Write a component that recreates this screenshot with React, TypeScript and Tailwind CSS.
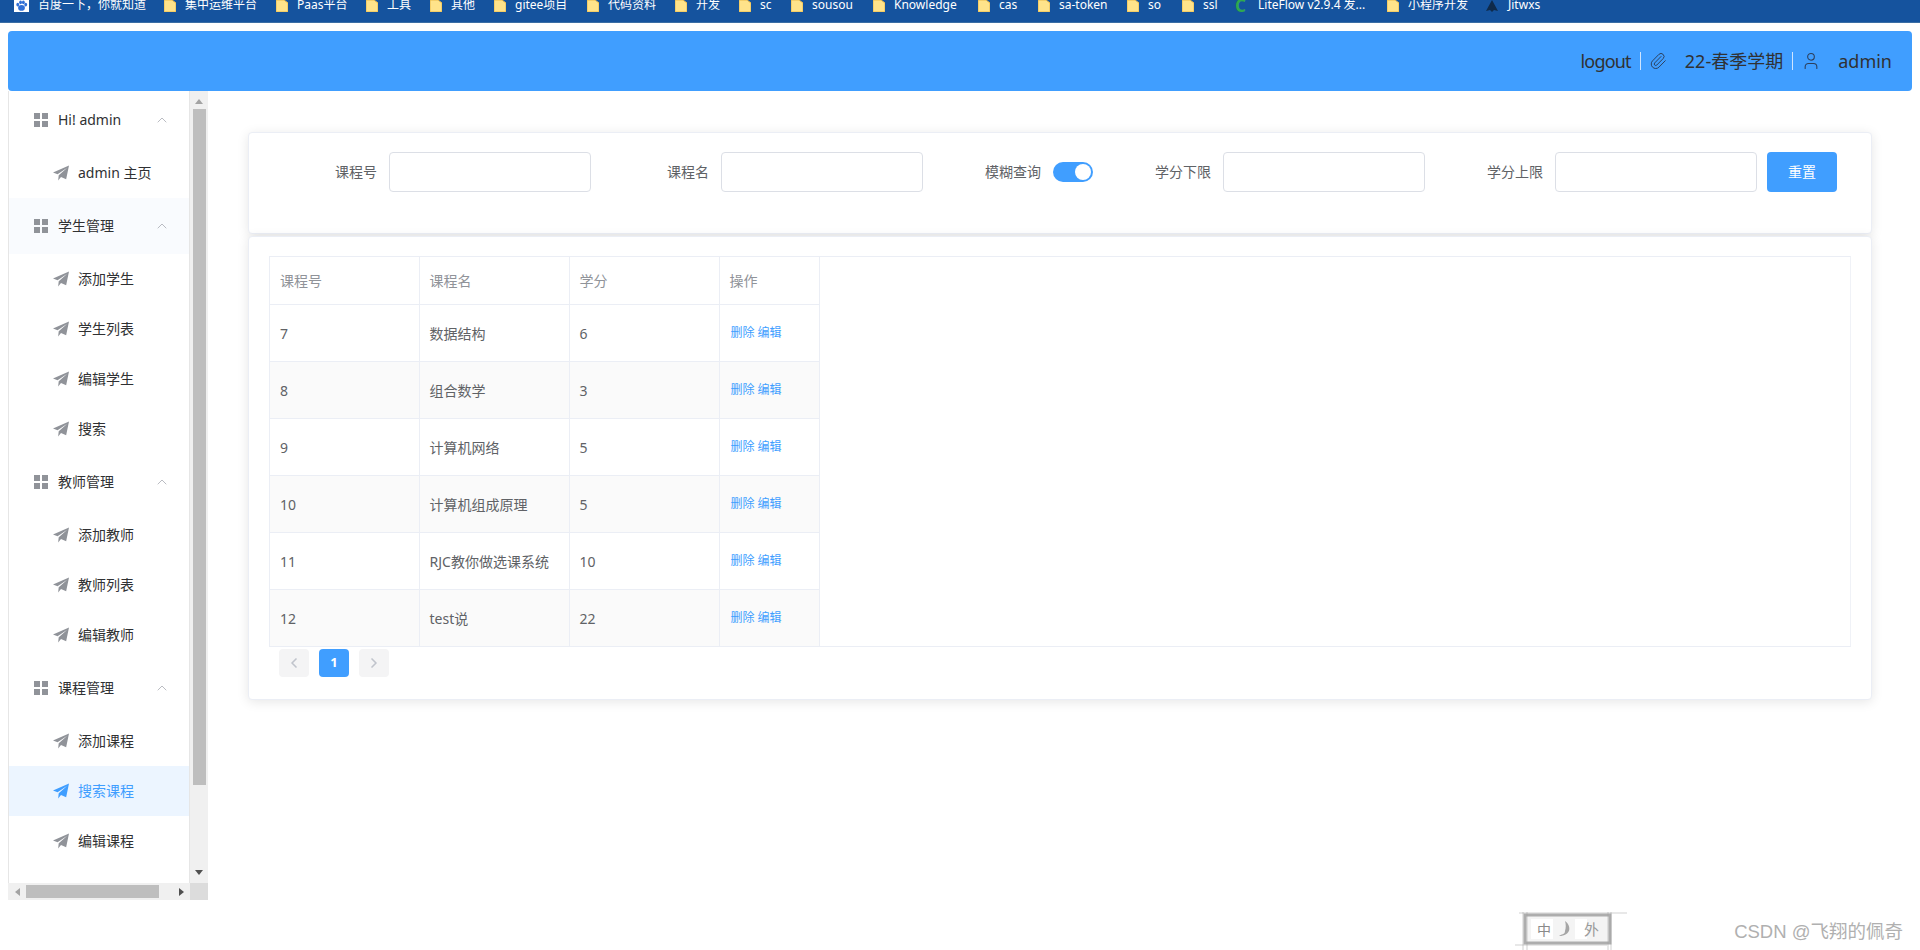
import { Paperclip, User, ChevronUp, ChevronLeft, ChevronRight } from 'lucide-react';

const bookmarks = [
	{ icon: 'baidu', label: '百度一下，你就知道', width: 'w-[150px]' },
	{ icon: 'folder', label: '集中运维平台', width: 'w-[112px]' },
	{ icon: 'folder', label: 'Paas平台', width: 'w-[90px]' },
	{ icon: 'folder', label: '工具', width: 'w-[64px]' },
	{ icon: 'folder', label: '其他', width: 'w-[64px]' },
	{ icon: 'folder', label: 'gitee项目', width: 'w-[93px]' },
	{ icon: 'folder', label: '代码资料', width: 'w-[88px]' },
	{ icon: 'folder', label: '开发', width: 'w-[64px]' },
	{ icon: 'folder', label: 'sc', width: 'w-[52px]' },
	{ icon: 'folder', label: 'sousou', width: 'w-[82px]' },
	{ icon: 'folder', label: 'Knowledge', width: 'w-[105px]' },
	{ icon: 'folder', label: 'cas', width: 'w-[60px]' },
	{ icon: 'folder', label: 'sa-token', width: 'w-[89px]' },
	{ icon: 'folder', label: 'so', width: 'w-[55px]' },
	{ icon: 'folder', label: 'ssl', width: 'w-[53px]' },
	{ icon: 'c', label: 'LiteFlow v2.9.4 发...', width: 'w-[152px]' },
	{ icon: 'folder', label: '小程序开发', width: 'w-[98px]' },
	{ icon: 'jit', label: 'Jitwxs', width: 'w-[60px]' },
];

const menu = [
	{ title: 'Hi! admin', items: ['admin 主页'] },
	{ title: '学生管理', items: ['添加学生', '学生列表', '编辑学生', '搜索'], hover: true },
	{ title: '教师管理', items: ['添加教师', '教师列表', '编辑教师'] },
	{ title: '课程管理', items: ['添加课程', '搜索课程', '编辑课程'] },
];

const courses = [
	{ id: 7, name: '数据结构', credit: 6 },
	{ id: 8, name: '组合数学', credit: 3 },
	{ id: 9, name: '计算机网络', credit: 5 },
	{ id: 10, name: '计算机组成原理', credit: 5 },
	{ id: 11, name: 'RJC教你做选课系统', credit: 10 },
	{ id: 12, name: 'test说', credit: 22 },
];

const BookmarkIcon = ({ type }: { type: string }) => {
	if (type === 'baidu') {
		return (
			<svg viewBox="0 0 16 12" className="w-[15px] h-3 shrink-0 bg-white">
				<ellipse cx="4" cy="4.5" rx="1.5" ry="2" fill="#2f6fd6" />
				<ellipse cx="7" cy="2" rx="1.5" ry="2" fill="#2f6fd6" />
				<ellipse cx="10" cy="2" rx="1.5" ry="2" fill="#2f6fd6" />
				<ellipse cx="12.5" cy="4.5" rx="1.5" ry="2" fill="#2f6fd6" />
				<ellipse cx="8" cy="8" rx="3.6" ry="3" fill="#2f6fd6" />
			</svg>
		);
	}
	if (type === 'c') {
		return (
			<span className="w-[14px] shrink-0 text-[17px] leading-[12px] font-bold text-[#2fa84f]">C</span>
		);
	}
	if (type === 'jit') {
		return (
			<svg viewBox="0 0 14 12" className="w-[14px] h-3 shrink-0">
				<path d="M7 0 L13 11 L9 10 L7 12 L5 10 L1 11 Z" fill="#0f2a4a" />
			</svg>
		);
	}
	return (
		<svg viewBox="0 0 12 12" className="w-3 h-3 shrink-0">
			<path d="M0 0 H8 L12 3 V12 H0 Z" fill="#ffe38a" stroke="#e9b949" strokeWidth="1" />
		</svg>
	);
};

const GridIcon = () => (
	<svg viewBox="0 0 14 14" className="w-[14px] h-[14px] shrink-0" fill="#909399">
		<rect x="0" y="0" width="6" height="6" />
		<rect x="8" y="0" width="6" height="6" />
		<rect x="0" y="8" width="6" height="6" />
		<rect x="8" y="8" width="6" height="6" />
	</svg>
);

const PlaneIcon = ({ active }: { active?: boolean }) => (
	<svg
		viewBox="0 0 14 14"
		className={active ? 'w-4 h-4 shrink-0 fill-[#409eff]' : 'w-4 h-4 shrink-0 fill-[#909399]'}
	>
		<path d="M14 0.5 L0 6.5 L4 8.2 L12.5 2.5 L5 9 L4.5 13.5 L7 10.5 L11.5 12.5 Z" />
	</svg>
);

const Field = ({ label, className, width }: { label: string; className: string; width: string }) => (
	<div className={`flex items-center gap-3 ${className}`}>
		<label className="text-sm text-[#606266] whitespace-nowrap">{label}</label>
		<input className={`h-10 ${width} bg-white border border-[#dcdfe6] rounded outline-none`} />
	</div>
);

const Sidebar = () => (
	<aside className="w-[200px] h-[809px] ml-2 flex flex-col shrink-0">
		<div className="flex h-[792px]">
			<nav className="w-[182px] border-x border-[#e6e6e6] overflow-hidden pt-px">
				{menu.map((group) => (
					<div key={group.title}>
						<div
							className={`h-14 flex items-center pl-[25px] text-sm text-[#303133] ${group.hover ? 'bg-[#f9fbfe]' : ''}`}
						>
							<GridIcon />
							<span className="ml-[10px] flex-1">{group.title}</span>
							<ChevronUp className="w-4 h-4 mr-[19px] text-[#a8abb2]" strokeWidth={1.2} />
						</div>
						{group.items.map((item) => {
							const active = item === '搜索课程';
							return (
								<div
									key={item}
									className={`h-[50px] flex items-center pl-[44px] gap-[9px] text-sm ${active ? 'bg-[#ecf5ff] text-[#409eff]' : 'text-[#303133]'}`}
								>
									<PlaneIcon active={active} />
									<span>{item}</span>
								</div>
							);
						})}
					</div>
				))}
			</nav>
			<div className="w-[18px] bg-[#f0f0f0] flex flex-col items-center">
				<svg viewBox="0 0 8 5" className="w-2 h-[5px] mt-2 fill-[#a3a3a3]">
					<path d="M4 0 L8 5 H0 Z" />
				</svg>
				<div className="w-[13px] h-[676px] mt-[5px] bg-[#bebebe]" />
				<svg viewBox="0 0 8 5" className="w-2 h-[5px] mt-[85px] fill-[#505050]">
					<path d="M0 0 H8 L4 5 Z" />
				</svg>
			</div>
		</div>
		<div className="h-[17px] flex bg-[#f0f0f0]">
			<div className="w-[182px] flex items-center pl-[7px]">
				<svg viewBox="0 0 5 8" className="w-[5px] h-2 fill-[#a3a3a3]">
					<path d="M5 0 V8 L0 4 Z" />
				</svg>
				<div className="w-[133px] h-[13px] ml-[6px] bg-[#bebebe]" />
				<svg viewBox="0 0 5 8" className="w-[5px] h-2 ml-[20px] fill-[#505050]">
					<path d="M0 0 L5 4 L0 8 Z" />
				</svg>
			</div>
			<div className="w-[18px] bg-[#dcdcdc]" />
		</div>
	</aside>
);

const CourseTable = () => (
	<div className="h-[391px] border border-[#ebeef5] border-r-[#f0f2f7]">
		<table className="w-[549px] table-fixed border-collapse text-sm text-[#606266]">
			<thead>
				<tr className="h-[47px] text-[#909399] text-left">
					<th className="w-[149px] pl-[10px] pt-[2px] font-normal border-r border-b border-[#ebeef5]">课程号</th>
					<th className="w-[150px] pl-[10px] pt-[2px] font-normal border-r border-b border-[#ebeef5]">课程名</th>
					<th className="w-[150px] pl-[10px] pt-[2px] font-normal border-r border-b border-[#ebeef5]">学分</th>
					<th className="w-[100px] pl-[10px] pt-[2px] font-normal border-r border-b border-[#ebeef5]">操作</th>
				</tr>
			</thead>
			<tbody>
				{courses.map((course, index) => (
					<tr key={course.id} className={index % 2 === 1 ? 'h-[57px] bg-[#fafafa]' : 'h-[57px]'}>
						<td className="pl-[10px] pt-[2px] border-r border-b border-[#ebeef5]">{course.id}</td>
						<td className="pl-[10px] pt-[2px] border-r border-b border-[#ebeef5] whitespace-nowrap">{course.name}</td>
						<td className="pl-[10px] pt-[2px] border-r border-b border-[#ebeef5]">{course.credit}</td>
						<td className="pl-[11px] pt-px border-r border-b border-[#ebeef5] text-xs text-[#409eff]">删除 编辑</td>
					</tr>
				))}
			</tbody>
		</table>
	</div>
);

const Pagination = () => (
	<div className="flex gap-[10px] ml-[10px] mt-[2px]">
		<button className="w-[30px] h-7 rounded-sm bg-[#f4f4f5] text-[#c0c4cc] flex items-center justify-center">
			<ChevronLeft className="w-4 h-4" strokeWidth={2.5} />
		</button>
		<button className="w-[30px] h-7 rounded-sm bg-[#409eff] text-white text-[13px] font-bold flex items-center justify-center">
			1
		</button>
		<button className="w-[30px] h-7 rounded-sm bg-[#f4f4f5] text-[#c0c4cc] flex items-center justify-center">
			<ChevronRight className="w-4 h-4" strokeWidth={2.5} />
		</button>
	</div>
);

const Stamp = () => (
	<svg viewBox="0 0 112 38" className="w-[112px] h-[38px]">
		<rect x="10" y="3" width="85" height="28" fill="#f4f4f4" />
		<rect x="16" y="7" width="22" height="20" fill="#ffffff" />
		<rect x="60" y="7" width="12" height="20" fill="#ffffff" />
		<g stroke="#a0a0a0" fill="none">
			<rect x="10" y="3" width="85" height="28" strokeWidth="3" opacity="0.85" />
			<path d="M4 1 H112 M0 33 H92 M8 0 V38 M12 0 V38 M93 0 V38 M96 0 V38" strokeWidth="0.7" opacity="0.7" />
		</g>
		<text x="22" y="23" fontSize="14" fill="#8a8a8a">
			中
		</text>
		<path d="M50 9 C57 14 56 24 44 24 C46 22 50 23 50 19 C51 16 51 12 50 9 Z" fill="#a5a5a5" />
		<text x="69" y="23" fontSize="15" fill="#9a9a9a">
			外
		</text>
	</svg>
);

const App = () => {
	return (
		<div className="relative w-[1920px] h-[950px] overflow-hidden bg-white font-['Noto_Sans','Noto_Sans_CJK_SC',sans-serif]">
			<div className="h-[23px] pl-[14px] flex bg-[#15539e] border-b border-[#3a6ea5] overflow-hidden">
				{bookmarks.map((b) => (
					<div key={b.label} className={`${b.width} flex items-start gap-[9px] h-3 shrink-0`}>
						<BookmarkIcon type={b.icon} />
						<span className="-mt-[4px] text-xs leading-[18px] text-white whitespace-nowrap">{b.label}</span>
					</div>
				))}
			</div>

			<header className="h-[60px] mt-2 mx-2 rounded-sm bg-[#409eff] flex items-center justify-end pr-5 text-[#303133] text-[18px]">
				<span className="tracking-[-0.8px]">logout</span>
				<span className="w-px h-[18px] bg-[#cfe5ff] ml-[9px] mr-[8px]" />
				<Paperclip className="w-[18px] h-[18px] text-[#2c3f5c]" strokeWidth={1.3} />
				<span className="ml-[18px]">22-春季学期</span>
				<span className="w-px h-[18px] bg-[#cfe5ff] ml-[9px] mr-[8px]" />
				<User className="w-5 h-5 text-[#2c3f5c]" strokeWidth={1.3} />
				<span className="ml-[17px]">admin</span>
			</header>

			<div className="flex">
				<Sidebar />
				<main className="pl-10 pt-[41px] flex-1">
					<div className="w-[1624px] h-[102px] rounded border border-[#ebeef5] bg-white shadow-[0_2px_12px_rgba(0,0,0,0.1)] flex items-start pt-[19px]">
						<Field label="课程号" className="ml-[86px]" width="w-[202px]" />
						<Field label="课程名" className="ml-[76px]" width="w-[202px]" />
						<div className="ml-[62px] h-10 flex items-center gap-3">
							<label className="text-sm text-[#606266]">模糊查询</label>
							<span className="w-10 h-5 rounded-full bg-[#409eff] flex justify-end items-center pr-[2px]">
								<span className="w-4 h-4 rounded-full bg-white" />
							</span>
						</div>
						<Field label="学分下限" className="ml-[62px]" width="w-[202px]" />
						<Field label="学分上限" className="ml-[62px]" width="w-[202px]" />
						<button className="ml-[10px] w-[70px] h-10 rounded bg-[#409eff] text-white text-sm">重置</button>
					</div>
					<div className="w-[1624px] h-[464px] mt-[2px] rounded border border-[#ebeef5] bg-white shadow-[0_2px_12px_rgba(0,0,0,0.1)] pt-[19px] pl-5 pr-5">
						<CourseTable />
						<Pagination />
					</div>
				</main>
			</div>

			<div className="absolute left-[1515px] top-[912px]">
				<Stamp />
			</div>
			<div className="absolute right-[17px] top-[920px] text-[18.5px] leading-6 text-[#b0b0b0] font-['Liberation_Sans','Noto_Sans_CJK_SC',sans-serif]">
				CSDN @飞翔的佩奇
			</div>
		</div>
	);
};

export default App;
